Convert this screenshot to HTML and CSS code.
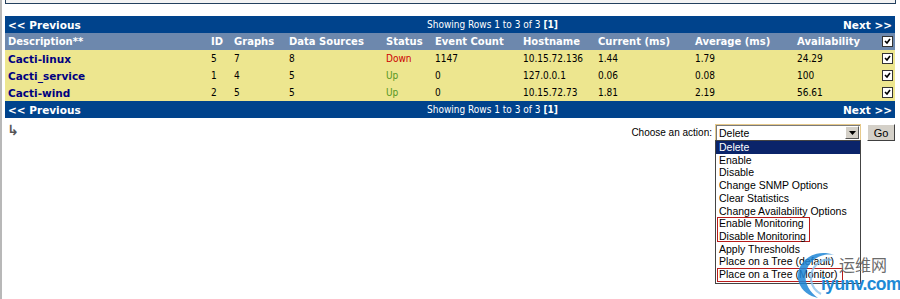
FILE: index.html
```html
<!DOCTYPE html>
<html lang="en">
<head>
    <meta charset="UTF-8">
    <title>Cacti - Devices</title>
    <link rel="stylesheet" href="styles.css">
</head>
<body>
<div class="page">
    <div class="topbox"></div>

    <table class="hosts">
        <colgroup>
            <col style="width:203px"><col style="width:23px"><col style="width:55px">
            <col style="width:97px"><col style="width:49px"><col style="width:88px">
            <col style="width:75px"><col style="width:97px"><col style="width:102px">
            <col style="width:84px"><col style="width:17px">
        </colgroup>
        <tr class="nav">
            <td colspan="11">
                <div class="nav-inner">
                    <span class="nav-prev">&lt;&lt; Previous</span>
                    <span class="nav-info">Showing Rows 1 to 3 of 3 <b>[1]</b></span>
                    <span class="nav-next">Next &gt;&gt;</span>
                </div>
            </td>
        </tr>
        <tr class="head">
            <th>Description**</th>
            <th>ID</th>
            <th>Graphs</th>
            <th>Data Sources</th>
            <th>Status</th>
            <th>Event Count</th>
            <th>Hostname</th>
            <th>Current (ms)</th>
            <th>Average (ms)</th>
            <th>Availability</th>
            <th><span class="check"></span></th>
        </tr>
        <tr class="row">
            <td><a class="host">Cacti-linux</a></td>
            <td>5</td><td>7</td><td>8</td>
            <td class="down">Down</td>
            <td>1147</td><td>10.15.72.136</td><td>1.44</td><td>1.79</td><td>24.29</td>
            <td><span class="check"></span></td>
        </tr>
        <tr class="row">
            <td><a class="host">Cacti_service</a></td>
            <td>1</td><td>4</td><td>5</td>
            <td class="up">Up</td>
            <td>0</td><td>127.0.0.1</td><td>0.06</td><td>0.08</td><td>100</td>
            <td><span class="check"></span></td>
        </tr>
        <tr class="row">
            <td><a class="host">Cacti-wind</a></td>
            <td>2</td><td>5</td><td>5</td>
            <td class="up">Up</td>
            <td>0</td><td>10.15.72.73</td><td>1.81</td><td>2.19</td><td>56.61</td>
            <td><span class="check"></span></td>
        </tr>
        <tr class="nav">
            <td colspan="11">
                <div class="nav-inner">
                    <span class="nav-prev">&lt;&lt; Previous</span>
                    <span class="nav-info">Showing Rows 1 to 3 of 3 <b>[1]</b></span>
                    <span class="nav-next">Next &gt;&gt;</span>
                </div>
            </td>
        </tr>
    </table>

    <div class="actions">
        <span class="arrow">&#8627;</span>
        <div class="chooser">
            <span class="label">Choose an action:</span>
            <div class="select-wrap">
                <div class="select">
                    <span class="select-value">Delete</span>
                    <span class="select-btn">
                        <svg width="7" height="4" viewBox="0 0 7 4"><path d="M0 0h7L3.5 4z" fill="#000"/></svg>
                    </span>
                </div>
                <ul class="options">
                    <li class="picked">Delete</li>
                    <li>Enable</li>
                    <li>Disable</li>
                    <li>Change SNMP Options</li>
                    <li>Clear Statistics</li>
                    <li>Change Availability Options</li>
                    <li class="mark mark-top">Enable Monitoring</li>
                    <li>Disable Monitoring</li>
                    <li>Apply Thresholds</li>
                    <li>Place on a Tree (default)</li>
                    <li class="mark mark-single">Place on a Tree (Monitor)</li>
                </ul>
            </div>
            <button class="go">Go</button>
        </div>
    </div>

    <div class="watermark">
        <svg class="wm-logo" width="42" height="48" viewBox="0 0 42 48">
            <path d="M38 5 C17 -3 -3 14 3 33 C6 41 13 46 22 48 C11 40 7 29 11 19 C15 9 26 3 38 5 Z" fill="#1f86d6" opacity="0.85"/>
            <path d="M36 10 C23 8 14 18 15 30 C16 36 19 41 25 44" fill="none" stroke="#8cc3ee" stroke-width="2.2" opacity="0.8"/>
        </svg>
        <span class="wm-cn">运维网</span>
        <span class="wm-url">iyunv.com</span>
    </div>
</div>
</body>
</html>
```

FILE: styles.css
```css
body {
    margin: 0;
    background: #fff;
    font-family: "DejaVu Sans", Verdana, sans-serif;
    font-size: 10px;
    color: #000;
}
.page {
    position: relative;
    height: 299px;
    border-left: 2px solid #b8b8b8;
    padding-left: 3px;
    padding-right: 4px;
    overflow: hidden;
}
.topbox {
    height: 3px;
    background: #f3f3f3;
    border: 1px solid #24405e;
    border-top: none;
    margin-bottom: 12px;
}
.hosts {
    width: 890px;
    border-collapse: collapse;
    table-layout: fixed;
}
.hosts td,
.hosts th {
    padding: 0 3px;
    height: 17px;
    white-space: nowrap;
    overflow: hidden;
    text-align: left;
}
.nav td {
    background: #00438c;
    color: #fff;
    padding: 0;
}
.nav-inner {
    display: grid;
    grid-template-columns: 422px auto 1fr;
    align-items: center;
    height: 17px;
}
.nav-prev {
    padding-left: 3px;
    font-weight: bold;
    font-size: 10.5px;
}
.nav-info {
    font-family: "DejaVu Sans Condensed", "DejaVu Sans", sans-serif;
    font-size: 10px;
}
.nav-next {
    text-align: right;
    padding-right: 3px;
    font-weight: bold;
    font-size: 10.5px;
}
.head th {
    background: #6d88ad;
    color: #fff;
    font-weight: bold;
    font-size: 10px;
}
.row td {
    background: #ede68f;
    font-size: 10px;
    font-family: "DejaVu Sans Condensed", "DejaVu Sans", sans-serif;
}
.row td.down {
    color: #cc0000;
}
.row td.up {
    color: #55961e;
}
.host {
    color: #000080;
    font-weight: bold;
    font-family: "DejaVu Sans", sans-serif;
    font-size: 10.5px;
}
.check {
    display: block;
    width: 9px;
    height: 9px;
    margin-left: 1px;
    background: #fff url("data:image/svg+xml,%3Csvg xmlns='http://www.w3.org/2000/svg' width='9' height='9'%3E%3Cpath d='M2 4l2 2 3-4' fill='none' stroke='%23000' stroke-width='1.6'/%3E%3C/svg%3E") no-repeat center;
    border: 1px solid #333;
}
.actions {
    display: flex;
    justify-content: space-between;
    align-items: flex-start;
    margin-top: 6px;
}
.arrow {
    color: #555;
    font-size: 14px;
    font-weight: bold;
    line-height: 12px;
    padding-left: 2px;
}
.chooser {
    display: flex;
    align-items: center;
    gap: 3px;
    font-family: "Liberation Sans", Arial, sans-serif;
    font-size: 10px;
    margin-right: 1px;
}
.select-wrap {
    position: relative;
    width: 146px;
}
.select {
    display: flex;
    align-items: center;
    justify-content: space-between;
    height: 15px;
    border: 1px solid #e6c98a;
    box-shadow: inset 1px 1px 0 #7a7a7a;
    background: #fff;
    font-size: 10.5px;
}
.select-value {
    padding-left: 3px;
}
.select-btn {
    width: 14px;
    height: 13px;
    margin-right: 1px;
    background: #d4d0c8;
    border: 1px solid;
    border-color: #fff #555 #555 #fff;
    box-sizing: border-box;
    display: flex;
    align-items: center;
    justify-content: center;
}
.options {
    position: absolute;
    top: 16px;
    left: 0;
    width: 146px;
    box-sizing: border-box;
    margin: 0;
    padding: 0 0 2px;
    list-style: none;
    background: #fff;
    border: 1px solid #444;
    font-size: 10.5px;
    line-height: 12.7px;
}
.options li {
    padding-left: 3px;
    position: relative;
}
.options li.picked {
    background: #0a246a;
    color: #fff;
}
.mark::before {
    content: "";
    position: absolute;
    left: 1px;
    border: 1px solid #b81c1c;
    pointer-events: none;
}
.mark-top::before {
    top: 0;
    width: 91px;
    height: 23px;
}
.mark-single::before {
    top: 0;
    width: 124px;
    height: 12px;
}
.go {
    margin-left: 3px;
    width: 28px;
    height: 17px;
    padding: 0;
    background: #d4d0c8;
    border: 1px solid;
    border-color: #fff #404040 #404040 #fff;
    font-family: "Liberation Sans", Arial, sans-serif;
    font-size: 11px;
}
.watermark {
    position: absolute;
    left: 794px;
    top: 250px;
    width: 106px;
    height: 48px;
}
.wm-logo {
    position: absolute;
    left: 0;
    top: 0;
}
.wm-cn {
    position: absolute;
    left: 43px;
    top: 6px;
    font-family: "Noto Sans CJK SC", sans-serif;
    font-size: 16px;
    color: #6b6b6b;
    line-height: 17px;
}
.wm-url {
    position: absolute;
    left: 25px;
    top: 25px;
    font-family: "Liberation Sans", Arial, sans-serif;
    font-weight: bold;
    font-size: 17.5px;
    letter-spacing: -0.6px;
    white-space: nowrap;
    color: #1e8ad6;
    line-height: 18px;
}
```
